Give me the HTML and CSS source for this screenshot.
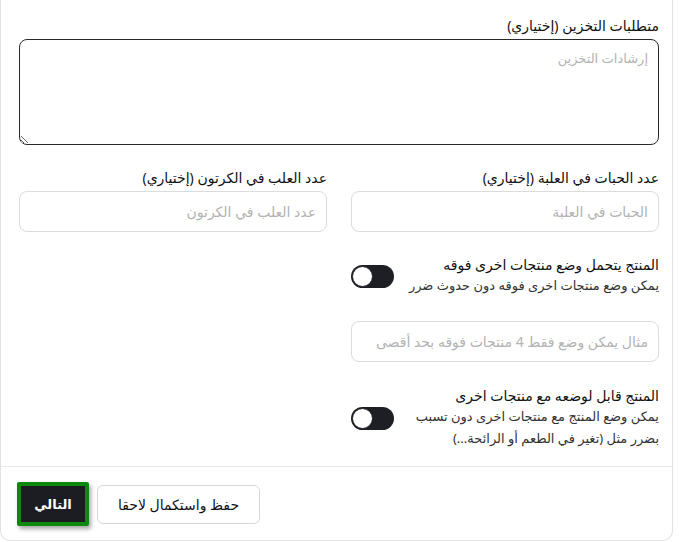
FILE: index.html
```html
<!DOCTYPE html>
<html lang="ar" dir="rtl">
<head>
  <meta charset="UTF-8" />
  <title>تفاصيل المنتج</title>
  <link rel="stylesheet" href="styles.css">
</head>
<body>
  <!-- بطاقة النموذج -->
  <div class="form-card">

    <div class="form-body">
      <!-- متطلبات التخزين -->
      <div class="field">
        <label class="field-label">متطلبات التخزين (إختياري)</label>
        <textarea class="field-textarea" placeholder="إرشادات التخزين"></textarea>
      </div>

      <!-- الحبات والعلب -->
      <div class="field-row">
        <div class="field">
          <label class="field-label">عدد الحبات في العلبة (إختياري)</label>
          <input class="field-input" type="text" placeholder="الحبات في العلبة" />
        </div>
        <div class="field">
          <label class="field-label">عدد العلب في الكرتون (إختياري)</label>
          <input class="field-input" type="text" placeholder="عدد العلب في الكرتون" />
        </div>
      </div>

      <!-- خيارات التكديس -->
      <div class="field-row">
        <div class="options-col">
          <div class="switch-field">
            <div class="switch-text">
              <div class="switch-title">المنتج يتحمل وضع منتجات اخرى فوقه</div>
              <div class="switch-desc">يمكن وضع منتجات اخرى فوقه دون حدوث ضرر</div>
            </div>
            <span class="switch"><span class="switch-knob"></span></span>
          </div>

          <input class="field-input" type="text" placeholder="مثال يمكن وضع فقط 4 منتجات فوقه بحد أقصى" />

          <div class="switch-field">
            <div class="switch-text">
              <div class="switch-title">المنتج قابل لوضعه مع منتجات اخرى</div>
              <div class="switch-desc">يمكن وضع المنتج مع منتجات اخرى دون تسبب<br>بضرر مثل (تغير في الطعم أو الرائحة...)</div>
            </div>
            <span class="switch"><span class="switch-knob"></span></span>
          </div>
        </div>
        <div></div>
      </div>
    </div>

    <!-- الأزرار -->
    <div class="form-footer">
      <button class="btn btn-outline">حفظ واستكمال لاحقا</button>
      <button class="btn btn-primary">التالي</button>
    </div>
  </div>
</body>
</html>
```

FILE: styles.css
```css
body {
  margin: 0;
  padding: 0;
  background-color: #ffffff;
  color: #1f1f1f;
  font-family: "Noto Sans", "DejaVu Sans", sans-serif;
}

.form-card {
  width: 673px;
  height: 541px;
  margin-left: 0;
  margin-right: auto;
  box-sizing: border-box;
  border: 1px solid #e2e2e2;
  border-top: none;
  border-radius: 0 0 10px 10px;
  background-color: #ffffff;
  display: flex;
  flex-direction: column;
}

.form-body {
  padding: 17px 13px 0 18px;
  display: flex;
  flex-direction: column;
  gap: 24px;
  height: 467px;
  flex-shrink: 0;
  box-sizing: border-box;
  border-bottom: 1px solid #e6e6e6;
}

.field {
  display: flex;
  flex-direction: column;
  gap: 4px;
}

.field-label {
  font-size: 14px;
  line-height: 18px;
  color: #111111;
}

.field-textarea {
  height: 106px;
  box-sizing: border-box;
  border: 1px solid #2a2a2a;
  border-radius: 8px;
  padding: 9px 10px;
  font-family: inherit;
  font-size: 13px;
  resize: vertical;
}

.field-input {
  height: 41px;
  box-sizing: border-box;
  border: 1px solid #dcdcdc;
  border-radius: 8px;
  padding: 0 10px;
  font-family: inherit;
  font-size: 14px;
  color: #1f1f1f;
}

.field-textarea::placeholder,
.field-input::placeholder {
  color: #b3b3b3;
}

.field-row {
  display: grid;
  grid-template-columns: 1fr 1fr;
  gap: 24px;
}

.options-col {
  display: flex;
  flex-direction: column;
  gap: 25px;
}

.switch-field {
  display: flex;
  align-items: center;
  justify-content: space-between;
}

.switch-title {
  font-size: 14px;
  line-height: 18px;
  color: #111111;
}

.switch-desc {
  font-size: 13px;
  line-height: 22px;
  color: #333333;
}

.switch {
  width: 43px;
  height: 23px;
  border-radius: 12px;
  background-color: #1e1f24;
  position: relative;
  flex-shrink: 0;
}

/* المقبض في وضع الإيقاف */
.switch-knob {
  position: absolute;
  top: 1px;
  left: 1px;
  width: 19px;
  height: 19px;
  border-radius: 50%;
  background-color: #ffffff;
  border: 1px solid #1e1f24;
}

.form-footer {
  display: flex;
  justify-content: flex-end;
  align-items: center;
  gap: 8px;
  padding: 15px 16px 0;
}

.btn {
  font-family: inherit;
  font-size: 14px;
  border-radius: 6px;
  cursor: pointer;
}

.btn-outline {
  width: 163px;
  height: 39px;
  background-color: #ffffff;
  border: 1px solid #d6d6d6;
  color: #111111;
}

.btn-primary {
  width: 72px;
  height: 44px;
  background-color: #1c1d22;
  color: #ffffff;
  font-size: 13px;
  font-weight: bold;
  border: 4px solid #0d8a0d;
  border-radius: 2px;
  box-shadow: 2px 3px 4px rgba(0, 0, 0, 0.35);
}
```
